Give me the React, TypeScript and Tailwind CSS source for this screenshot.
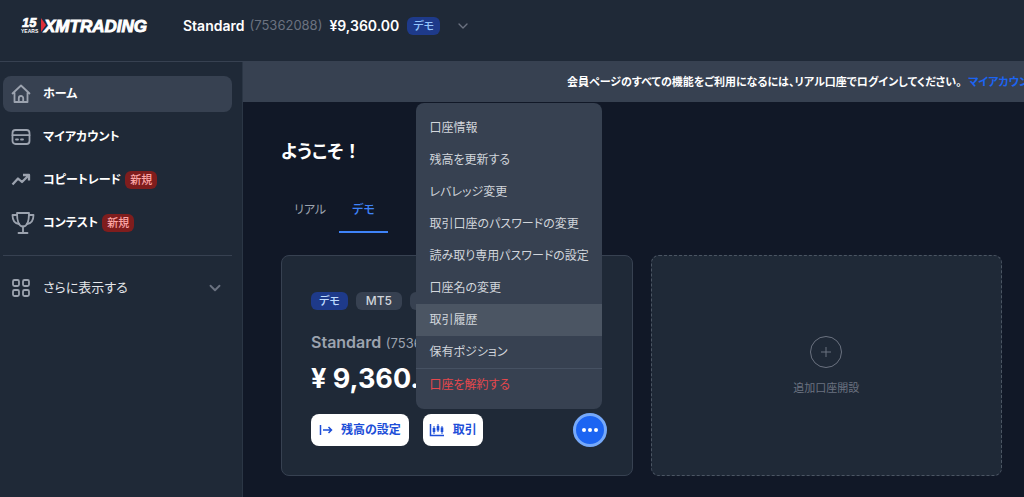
import type { ReactNode } from "react";
import { ChevronDown } from "lucide-react";

function Logo() {
  return (
    <svg
      role="img"
      aria-label="XMTrading 15 years"
      viewBox="0 0 128 20"
      className="h-5 w-32"
      fill="#fff"
      fontFamily="'Liberation Sans', sans-serif"
      fontWeight="700"
    >
      <text x="2" y="11" fontSize="13" fontStyle="italic" stroke="#fff" strokeWidth="0.7">15</text>
      <text x="1" y="17" fontSize="5">YEARS</text>
      <path d="M21 2 L26 9 L21 16 Z" fill="#dc2f3a" />
      <text x="24" y="16" fontSize="17" fontStyle="italic" stroke="#fff" strokeWidth="0.9">XMTRADING</text>
    </svg>
  );
}

function StrokeIcon({ children }: { children: ReactNode }) {
  return (
    <svg
      viewBox="0 0 20 20"
      className="size-5"
      fill="none"
      stroke="currentColor"
      strokeWidth="1.8"
      strokeLinecap="round"
      strokeLinejoin="round"
      aria-hidden="true"
    >
      {children}
    </svg>
  );
}

function HomeIcon() {
  return (
    <StrokeIcon>
      <path d="M1.5 9.5 L10 1.5 L18.5 9.5 M3.5 8.5 V18 H16.5 V8.5" />
      <path d="M7.8 18 V14.2 a2.2 2.2 0 0 1 4.4 0 V18" />
    </StrokeIcon>
  );
}

function CardIcon() {
  return (
    <StrokeIcon>
      <rect x="1.5" y="3" width="17" height="14" rx="3" />
      <path d="M1.5 8.2 H18.5 M5 12.5 H7 M10 12.5 H12" />
    </StrokeIcon>
  );
}

function TrendIcon() {
  return (
    <svg viewBox="0 0 20 20" className="size-5" fill="none" stroke="currentColor" strokeWidth="2.3" strokeLinejoin="round" aria-hidden="true">
      <path d="M1.5 14.5 L7 8.5 L11 12 L17.5 5.5 M12 5 H18 V10.5" />
    </svg>
  );
}

function TrophyIcon() {
  return (
    <svg
      viewBox="0 0 24 24"
      className="size-6"
      fill="none"
      stroke="currentColor"
      strokeWidth="1.8"
      strokeLinecap="round"
      strokeLinejoin="round"
      aria-hidden="true"
    >
      <path d="M6 2 H18 C18 9 16.5 15.5 12 15.5 C7.5 15.5 6 9 6 2 Z" />
      <path d="M6 4 H1.5 C1.5 9 4 12.5 8 13 M18 4 H22.5 C22.5 9 20 12.5 16 13" />
      <path d="M12 15.5 V22 M7.5 22 H16.5" />
    </svg>
  );
}

function GridIcon() {
  return (
    <StrokeIcon>
      <rect x="2" y="2" width="6" height="6" rx="1.5" />
      <rect x="12" y="2" width="6" height="6" rx="1.5" />
      <rect x="2" y="12" width="6" height="6" rx="1.5" />
      <rect x="12" y="12" width="6" height="6" rx="1.5" />
    </StrokeIcon>
  );
}

function DepositIcon() {
  return (
    <svg viewBox="0 0 14 14" className="size-[14px]" fill="none" stroke="currentColor" strokeWidth="1.5" aria-hidden="true">
      <path d="M1.5 2 V12 M4 7 H12.5 M9.5 4 L12.5 7 L9.5 10" />
    </svg>
  );
}

function CandlesIcon() {
  return (
    <svg viewBox="0 0 16 14" className="h-[14px] w-4" fill="none" stroke="currentColor" aria-hidden="true">
      <path d="M1.5 1 V12.5 H15" strokeWidth="1.5" />
      <path d="M5 3 V11 M9 1 V9 M13 3 V11" strokeWidth="1" />
      <path d="M5 5 V9 M9 3 V7.5 M13 4.5 V9" strokeWidth="2.6" />
    </svg>
  );
}

function NavItem({ icon, label, badge, active }: { icon: ReactNode; label: string; badge?: string; active?: boolean }) {
  return (
    <a
      href="#"
      aria-current={active ? "page" : undefined}
      className={
        active
          ? "flex h-9 items-center rounded-lg bg-[#374151] px-2"
          : "flex h-9 items-center rounded-lg px-2"
      }
    >
      <span className="flex w-8 items-center text-[#9ca3af]">{icon}</span>
      <span className="text-[12px] font-bold text-white">{label}</span>
      {badge && (
        <span className="ml-1 rounded-md bg-[#7f1d1d] px-[5px] text-[11px] leading-[18px] font-medium text-[#fca5a5]">
          {badge}
        </span>
      )}
    </a>
  );
}

const menuItems = [
  "口座情報",
  "残高を更新する",
  "レバレッジ変更",
  "取引口座のパスワードの変更",
  "読み取り専用パスワードの設定",
  "口座名の変更",
  "取引履歴",
  "保有ポジション",
];

function AccountMenu() {
  return (
    <div
      role="menu"
      className="absolute right-[5px] bottom-[38px] z-10 w-[186px] rounded-lg bg-[#374151] py-[9px] text-[12px] font-normal text-[#d1d5db]"
    >
      {menuItems.map((item) => (
        <button
          key={item}
          type="button"
          role="menuitem"
          className={
            item === "取引履歴"
              ? "block h-8 w-full bg-[#4b5563] px-[14px] text-left whitespace-nowrap"
              : "block h-8 w-full px-[14px] text-left whitespace-nowrap"
          }
        >
          {item}
        </button>
      ))}
      <button
        type="button"
        role="menuitem"
        className="block h-8 w-full border-t border-[#465162] px-[14px] text-left text-[#e5484d]"
      >
        口座を解約する
      </button>
    </div>
  );
}

function AccountCard() {
  return (
    <section className="rounded-lg border border-[#374151] bg-[#1f2937] pt-9 pr-[25px] pb-7 pl-[29px]">
      <div className="flex gap-2 text-[12px] leading-[18px] font-medium">
        <span className="rounded-md bg-[#1e3a8a] px-2 text-[11px] text-[#bfdbfe]">デモ</span>
        <span className="rounded-md bg-[#374151] px-[10px] text-[#d1d5db]">MT5</span>
        <span className="rounded-md bg-[#374151] px-[10px] text-[#d1d5db]">JPY</span>
      </div>
      <p className="mt-5 leading-6 text-[#9ca3af]">
        <span className="text-[16px] font-semibold">Standard</span>{" "}
        <span className="text-[13px]">(75362088)</span>
      </p>
      <p className="mt-2 text-[27px] leading-8 font-bold text-white">¥ 9,360.00</p>
      <div className="mt-[18px] flex items-center gap-[14px] text-[12px] font-bold text-[#1d4ed8]">
        <button type="button" className="flex h-8 items-center gap-2 rounded-lg bg-white px-2">
          <DepositIcon />
          残高の設定
        </button>
        <button type="button" className="flex h-8 items-center gap-2 rounded-lg bg-white px-[6px]">
          <CandlesIcon />
          取引
        </button>
        <div className="relative ml-auto">
          <AccountMenu />
          <button
            type="button"
            aria-label="口座メニュー"
            aria-expanded="true"
            className="flex size-[34px] items-center justify-center gap-[2px] rounded-full border-[3px] border-[#76a9fa] bg-[#1c64f2]"
          >
            <span className="size-1 rounded-full bg-white" />
            <span className="size-1 rounded-full bg-white" />
            <span className="size-1 rounded-full bg-white" />
          </button>
        </div>
      </div>
    </section>
  );
}

export default function App() {
  return (
    <div className="flex min-h-screen flex-col overflow-hidden bg-[#111827] font-['Inter','Noto_Sans_CJK_JP',sans-serif] [font-feature-settings:'palt']">
      <header className="flex h-[62px] items-center border-b border-[#374151] bg-[#1f2937] pb-[10px] pl-5">
        <Logo />
        <button type="button" className="ml-[35px] flex items-center text-[14px] text-white">
          <span className="font-semibold">Standard</span>
          <span className="ml-[5px] text-[13px] text-[#6b7280]">(75362088)</span>
          <span className="ml-[7px] font-semibold">¥9,360.00</span>
          <span className="ml-2 rounded-md bg-[#1e3a8a] px-[6px] text-[11px] leading-[18px] font-medium text-[#93c5fd]">デモ</span>
          <ChevronDown className="ml-[15px] size-4 text-[#6b7280]" />
        </button>
      </header>
      <div className="flex flex-1">
        <aside className="w-[243px] shrink-0 border-r border-[#2b3645] bg-[#1f2937] pt-[14px] pr-[10px] pl-[3px]">
          <nav className="flex flex-col gap-[7px]">
            <NavItem icon={<HomeIcon />} label="ホーム" active />
            <NavItem icon={<CardIcon />} label="マイアカウント" />
            <NavItem icon={<TrendIcon />} label="コピートレード" badge="新規" />
            <NavItem icon={<TrophyIcon />} label="コンテスト" badge="新規" />
          </nav>
          <hr className="mt-[14px] border-[#374151]" />
          <button type="button" className="mt-[14px] flex h-9 w-full items-center px-2 text-[13px] text-[#e5e7eb]">
            <span className="w-8 text-[#9ca3af]">
              <GridIcon />
            </span>
            さらに表示する
            <ChevronDown className="ml-auto size-[18px] text-[#6b7280]" strokeWidth={2.5} />
          </button>
        </aside>
        <main className="min-w-0 flex-1">
          <div className="flex h-10 items-center overflow-hidden bg-[#374151] pl-[324px] text-[11px] font-bold whitespace-nowrap text-white">
            <p>
              会員ページのすべての機能をご利用になるには、リアル口座でログインしてください。{" "}
              <a href="#" className="ml-1 text-[#1c64f2]">マイアカウント</a>
            </p>
          </div>
          <div className="pt-9 pr-[22px] pb-5 pl-[38px]">
            <h1 className="text-[18px] leading-7 font-bold text-white">
              ようこそ<span className="[font-feature-settings:normal]">！</span>
            </h1>
            <div role="tablist" className="mt-[18px] flex text-[12px] leading-[20px]">
              <button type="button" role="tab" aria-selected="false" className="border-b-2 border-transparent px-[13px] pt-4 pb-[11px] text-[#9ca3af]">
                リアル
              </button>
              <button type="button" role="tab" aria-selected="true" className="border-b-2 border-[#3f83f8] px-[13px] pt-4 pb-[11px] font-medium text-[#3f83f8]">
                デモ
              </button>
            </div>
            <div className="mt-[22px] grid grid-cols-2 gap-[18px]">
              <AccountCard />
              <button type="button" className="flex flex-col items-center justify-center gap-3 rounded-lg border border-dashed border-[#4b5563] bg-[#1f2937] text-[11px] leading-4 text-[#6b7280]">
                <span className="flex size-8 items-center justify-center rounded-full border border-[#6b7280]">
                  <svg viewBox="0 0 12 12" className="size-3" stroke="currentColor" aria-hidden="true">
                    <path d="M6 1 V11 M1 6 H11" />
                  </svg>
                </span>
                追加口座開設
              </button>
            </div>
          </div>
        </main>
      </div>
    </div>
  );
}
